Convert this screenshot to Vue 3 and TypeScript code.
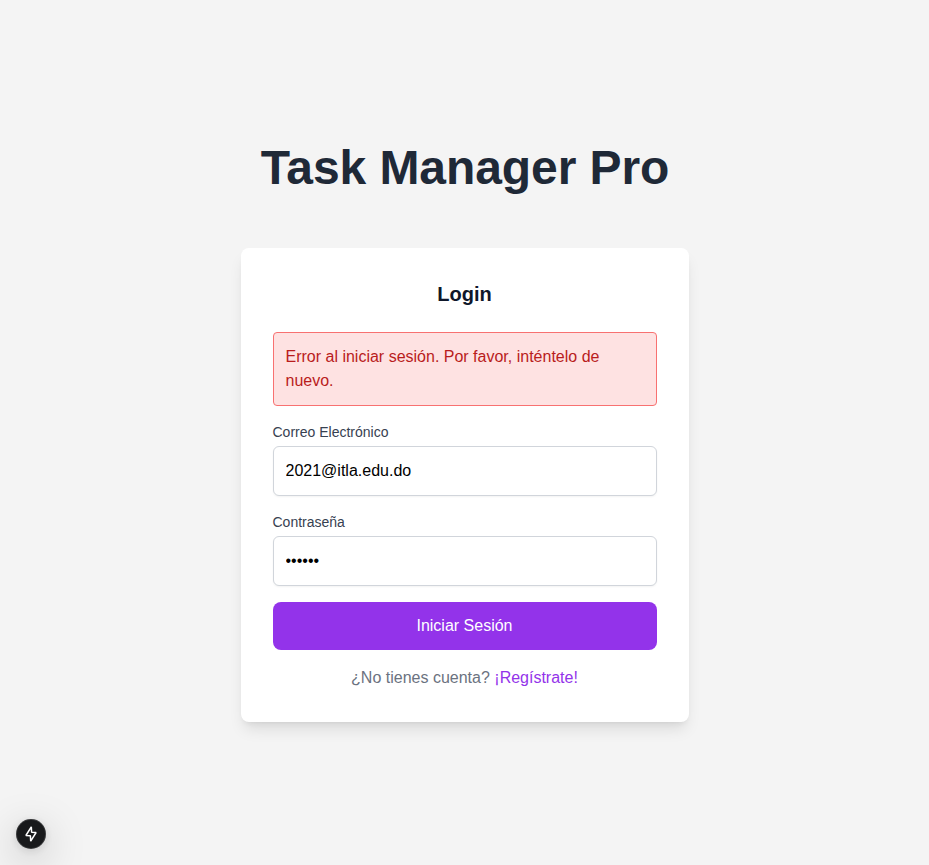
<script setup lang="ts">
import { ref } from 'vue'

const email = ref<string>('2021@itla.edu.do')
const password = ref<string>('123456')
const error = ref<string>('Error al iniciar sesión. Por favor, inténtelo de nuevo.')
</script>

<template>
  <main class="page">
    <h1 class="title">Task Manager Pro</h1>
    <section class="card">
      <h2 class="heading">Login</h2>
      <div v-if="error" class="alert">{{ error }}</div>
      <form class="form" @submit.prevent>
        <div class="field">
          <label class="label" for="email">Correo Electrónico</label>
          <input id="email" v-model="email" class="input" type="text" />
        </div>
        <div class="field">
          <label class="label" for="password">Contraseña</label>
          <input id="password" v-model="password" class="input" type="password" />
        </div>
        <button class="submit" type="submit">Iniciar Sesión</button>
      </form>
      <p class="signup">¿No tienes cuenta? <a class="link" href="#">¡Regístrate!</a></p>
    </section>
    <div class="indicator">
      <svg width="16" height="16" viewBox="0 0 16 16" fill="none">
        <path
          d="M8.3 0.8L8.6 6.3L13.1 6.5L7.7 15.2L7.4 9.7L2.9 9.5Z"
          stroke="#fff"
          stroke-width="1.5"
          stroke-linejoin="bevel"
        />
      </svg>
    </div>
  </main>
</template>

<style>
body {
  background: #f4f4f4;
}
</style>

<style scoped>
.page {
  box-sizing: border-box;
  min-height: 100vh;
  display: flex;
  flex-direction: column;
  align-items: center;
  justify-content: center;
  gap: 56px;
  background: #f4f4f4;
  font-family: 'Liberation Sans', Arial, sans-serif;
  font-size: 16px;
  line-height: 24px;
}
.title {
  margin: 0;
  padding-left: 1px;
  color: #1f2937;
  font-size: 48px;
  line-height: 48px;
  font-weight: 700;
  letter-spacing: -0.08px;
}
.card {
  box-sizing: border-box;
  width: 448px;
  padding: 32px;
  border-radius: 8px;
  background: #fff;
  box-shadow: 0 10px 15px -3px rgba(0, 0, 0, 0.1), 0 4px 6px -4px rgba(0, 0, 0, 0.1);
}
.heading {
  margin: 0 0 24px;
  color: #0f172a;
  font-size: 20px;
  line-height: 28px;
  font-weight: 600;
  text-align: center;
}
.alert {
  margin-bottom: 16px;
  padding: 12px;
  border: 1px solid #f87171;
  border-radius: 4px;
  background: #fee2e2;
  color: #b91c1c;
}
.form {
  display: flex;
  flex-direction: column;
  gap: 16px;
}
.field {
  display: flex;
  flex-direction: column;
  gap: 4px;
}
.label {
  color: #374151;
  font-size: 14px;
  line-height: 20px;
}
.input {
  box-sizing: border-box;
  width: 100%;
  height: 50px;
  margin: 0;
  padding: 12px;
  border: 1px solid #d1d5db;
  border-radius: 6px;
  outline: none;
  background: #fff;
  color: #000;
  font: inherit;
  box-shadow: 0 1px 2px rgba(0, 0, 0, 0.05);
}
.submit {
  height: 48px;
  padding: 0;
  border: 0;
  border-radius: 8px;
  background: #9333ea;
  color: #fff;
  font: inherit;
}
.signup {
  margin: 16px 0 0;
  color: #6b7280;
  text-align: center;
}
.link {
  color: #9333ea;
  text-decoration: none;
}
.indicator {
  position: fixed;
  left: 16px;
  bottom: 16px;
  display: flex;
  align-items: center;
  justify-content: center;
  width: 30px;
  height: 30px;
  border-radius: 50%;
  background: #18191b;
  box-shadow: inset 0 0 0 1px rgba(255, 255, 255, 0.14), 0 11px 40px rgba(0, 0, 0, 0.25), 0 2px 10px rgba(0, 0, 0, 0.12);
}
</style>
